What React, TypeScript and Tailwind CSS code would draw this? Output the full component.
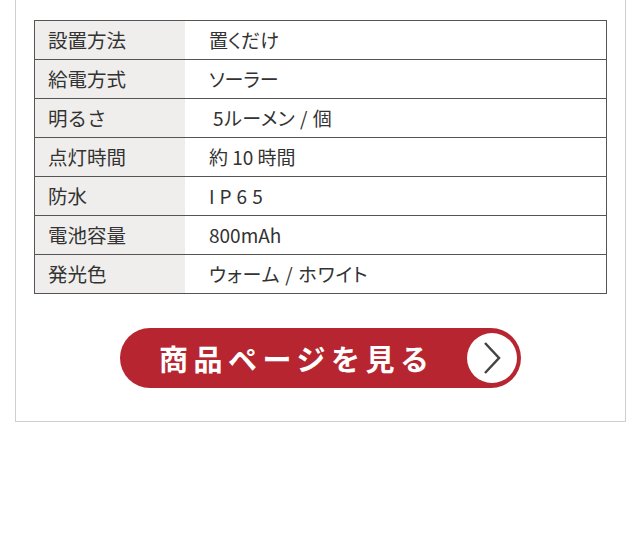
const specs: [string, string, string][] = [
  ['設置方法', '置くだけ', 'pl-[24px]'],
  ['給電方式', 'ソーラー', 'pl-[24px]'],
  ['明るさ', '5ルーメン / 個', 'pl-[28px] tracking-[0.5px]'],
  ['点灯時間', '約 10 時間', 'pl-[24px]'],
  ['防水', 'IP65', 'pl-[24px] tracking-[5px]'],
  ['電池容量', '800mAh', 'pl-[24px]'],
  ['発光色', 'ウォーム / ホワイト', 'pl-[24px] tracking-[0.8px]'],
]

export default function App() {
  return (
    <div className="h-[535px] w-[640px] bg-white font-['Noto_Sans_CJK_JP',sans-serif] text-[#333]">
      <div className="ml-[15px] w-[611px] border-x border-b border-[#cfcfcf] px-[18px] pb-[33px] pt-[20px]">
        <div className="border border-[#555]">
          {specs.map(([label, value, extra], i) => (
            <div key={label} className={`flex h-[38px] ${i > 0 ? 'box-content border-t border-[#555]' : ''}`}>
              <div className="flex w-[150px] items-center bg-[#efeeec] pl-[13px] text-[19.5px]">{label}</div>
              <div className={`flex items-center text-[19px] [font-feature-settings:'palt'] ${extra}`}>{value}</div>
            </div>
          ))}
        </div>

        <div className="mt-[34px] flex justify-center">
          <a
            href="#"
            className="flex h-[60px] w-[401px] items-center justify-between rounded-full bg-[#b72630] pl-[39px] pr-[4px]"
          >
            <span className="text-[29px] font-bold leading-none tracking-[5.5px] text-white">商品ページを見る</span>
            <span className="flex h-[50px] w-[50px] items-center justify-center rounded-full bg-white">
              <svg width="20" height="32" viewBox="0 0 20 32" fill="none">
                <path d="M3 1 L17 16 L3 31" stroke="#444" strokeWidth="2.5" strokeLinejoin="miter" />
              </svg>
            </span>
          </a>
        </div>
      </div>
    </div>
  )
}
